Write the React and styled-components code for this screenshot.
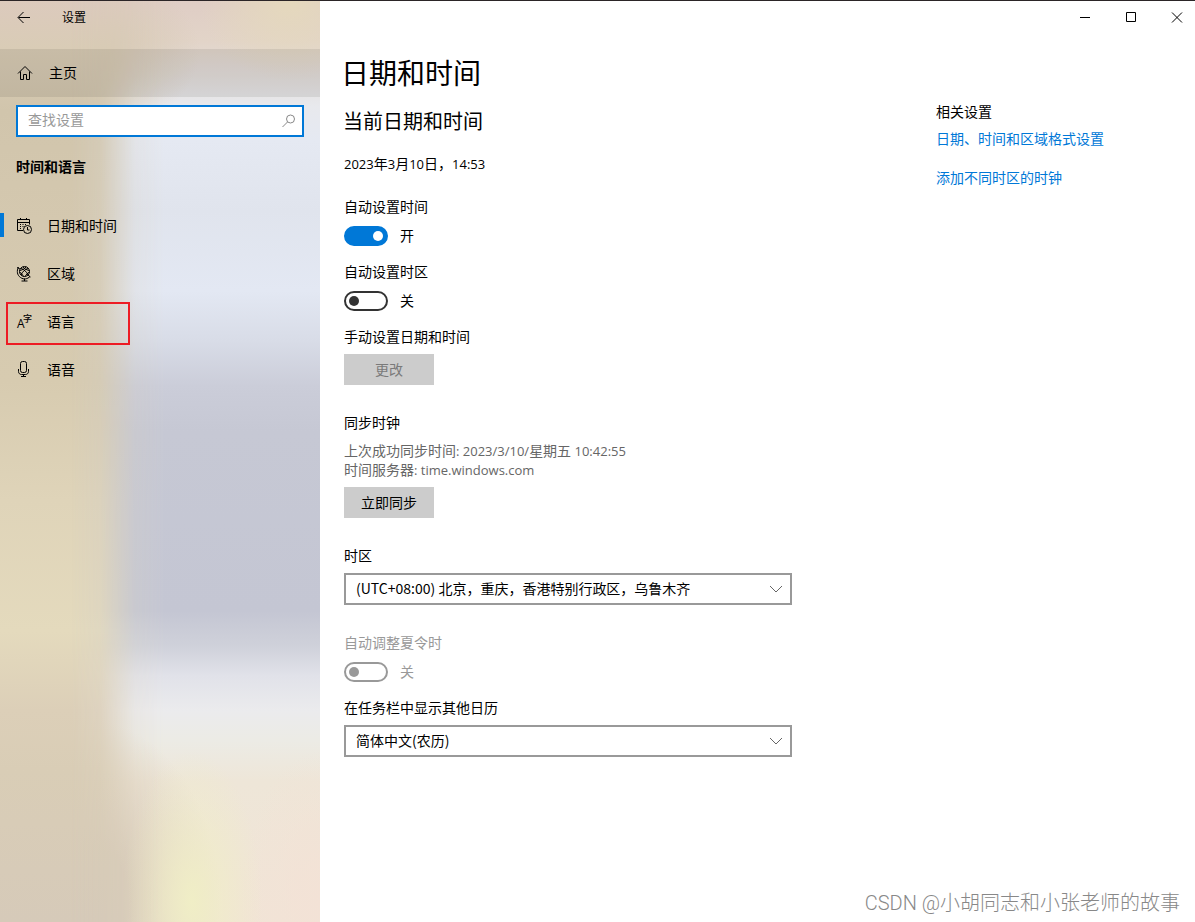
import { useState } from "react";
import styled, { createGlobalStyle } from "styled-components";

const GlobalStyle = createGlobalStyle`
  * {
    box-sizing: border-box;
  }
  body {
    margin: 0;
    background: #ffffff;
    color: #000000;
    font-family: "Open Sans", "Noto Sans CJK SC", sans-serif;
    font-size: 14px;
    line-height: 20px;
  }
  button,
  input,
  select {
    font: inherit;
    color: inherit;
    margin: 0;
  }
  h1,
  h2,
  h3,
  p {
    margin: 0;
    font-weight: 400;
  }
`;

const Window = styled.div`
  position: relative;
  display: grid;
  grid-template-columns: 320px minmax(0, 1fr);
  min-height: 100vh;
  border-top: 1px solid #2b2527;
`;

const Sidebar = styled.aside`
  position: relative;
  isolation: isolate;
  background: linear-gradient(
    #dccabd 0,
    #d9ccb6 48px,
    #d1c5ac 110px,
    #d4c8af 220px,
    #d7cbb0 380px,
    #dfd4b9 500px,
    #e4dabd 630px,
    #dccfb8 710px,
    #d9cdb6 770px,
    #d6cab9 100%
  );

  /* blurred wallpaper showing through on the right */
  &::before {
    content: "";
    position: absolute;
    inset: 0;
    z-index: -1;
    background: radial-gradient(
        70px 150px at 192px 900px,
        #f0eec6 0,
        #f0eec600 100%
      ),
      radial-gradient(130px 180px at 90px 900px, #d8ccba 30%, #d8ccba00 100%),
      radial-gradient(140px 90px at 60px 50px, #d5c8b3 30%, #d5c8b300 100%),
      radial-gradient(90px 80px at 290px 0, #e5d9bd 0, #e5d9bd00 100%),
      radial-gradient(80px 150px at 320px 900px, #f3e2d6 0, #f3e2d600 100%),
      linear-gradient(
        #dfcdc5 0,
        #e2d4c8 40px,
        #e3dedb 75px,
        #e8e9ed 105px,
        #e5e9f2 140px,
        #e0e4ed 210px,
        #e3e8f3 290px,
        #d8dce7 340px,
        #cbcdd9 385px,
        #c6c8d4 430px,
        #c4c6d3 610px,
        #cfd1da 645px,
        #e1e2e9 675px,
        #ebebed 710px,
        #ecebe5 740px,
        #eee6d8 780px,
        #f1e4d6 100%
      );
    mask-image: linear-gradient(
      to right,
      transparent 70px,
      #00000026 100px,
      #0000008c 120px,
      #000000d9 135px,
      #000000 165px
    );
  }
`;

const SidebarHeader = styled.header`
  display: flex;
  align-items: flex-start;
  height: 48px;
  font-size: 12px;
  line-height: 34px;
`;

const BackButton = styled.button`
  display: grid;
  place-items: center;
  width: 48px;
  height: 32px;
  padding: 0;
  border: 0;
  background: none;
`;

const AppName = styled.span`
  padding-left: 14px;
`;

const HomeLink = styled.a`
  display: flex;
  align-items: center;
  gap: 16px;
  height: 48px;
  padding: 0 17px;
  background: rgba(0, 0, 0, 0.08);
  color: inherit;
  text-decoration: none;
`;

const SearchBox = styled.label`
  display: flex;
  align-items: center;
  height: 32px;
  margin: 8px 16px 0;
  padding: 0 5px 0 10px;
  border: 2px solid #0078d7;
  background: #ffffff;
`;

const SearchInput = styled.input`
  flex: 1;
  min-width: 0;
  padding: 0 0 2px;
  border: 0;
  outline: 0;
  background: none;
  &::placeholder {
    color: #999999;
    opacity: 1;
  }
`;

const SectionTitle = styled.h2`
  padding: 20px 16px 0;
  font-size: 14px;
  font-weight: 700;
`;

const Nav = styled.nav`
  display: flex;
  flex-direction: column;
  padding-top: 25px;
`;

const NavItem = styled.a`
  position: relative;
  display: flex;
  align-items: center;
  gap: 15px;
  height: 48px;
  padding: 0 16px;
  color: inherit;
  text-decoration: none;

  &[aria-current="page"]::before {
    content: "";
    position: absolute;
    left: 0;
    top: 11px;
    width: 4px;
    height: 24px;
    background: #0078d7;
  }
`;

const Marker = styled.span`
  position: absolute;
  left: 6px;
  top: 4px;
  width: 124px;
  height: 43px;
  border: 2px solid #ed1c24;
`;

const Main = styled.main`
  display: flex;
  flex-direction: column;
`;

const WindowControls = styled.div`
  display: flex;
  justify-content: flex-end;
  gap: 10px;
`;

const ControlButton = styled.button`
  display: grid;
  place-items: center;
  width: 36px;
  height: 32px;
  padding: 0;
  border: 0;
  background: none;
`;

const Page = styled.div`
  display: grid;
  grid-template-columns: minmax(0, 1fr) 259px;
  padding: 22px 0 32px 24px;
`;

const PageTitle = styled.h1`
  margin-left: -3px;
  font-size: 28px;
  line-height: 36px;
`;

const Subtitle = styled.h2`
  margin-left: -1px;
  padding-top: 17px;
  font-size: 20px;
  line-height: 28px;
`;

const Now = styled.p`
  padding: 18px 0 23px;
`;

/* latin runs are set a size down to sit with the chinese text */
const Latin = styled.span`
  font-size: 13px;
  line-height: 1;
`;

const Field = styled.section`
  display: flex;
  flex-direction: column;
  align-items: flex-start;
  gap: ${(props) => props.$gap || 7}px;
  max-width: 448px;
  margin-bottom: ${(props) => props.$after || 16}px;
`;

const Label = styled.label`
  color: ${(props) => (props.$disabled ? "#999999" : "#000000")};
`;

const SwitchRow = styled.div`
  display: flex;
  align-items: center;
  gap: 12px;
  height: 20px;
  color: ${(props) => (props.$disabled ? "#999999" : "#000000")};
`;

const SwitchInput = styled.input`
  appearance: none;
  display: flex;
  align-items: center;
  width: 44px;
  height: 20px;
  padding: 0 3px;
  border: 2px solid #333333;
  border-radius: 10px;
  background: #ffffff;

  &::before {
    content: "";
    width: 10px;
    height: 10px;
    border-radius: 50%;
    background: #333333;
  }
  &:checked {
    justify-content: flex-end;
    border-color: #0078d7;
    background: #0078d7;
  }
  &:checked::before {
    background: #ffffff;
  }
  &:disabled {
    border-color: #999999;
  }
  &:disabled::before {
    background: #999999;
  }
`;

const Button = styled.button`
  min-width: 90px;
  height: 31px;
  padding: 0 16px;
  border: 0;
  background: #cccccc;
  &:disabled {
    color: #7a7a7a;
  }
`;

const SyncInfo = styled.p`
  color: #666666;
  line-height: 19px;
`;

const SelectBox = styled.div`
  display: grid;
  align-items: center;
  width: 100%;

  > * {
    grid-area: 1 / 1;
  }
  svg {
    justify-self: end;
    margin-right: 8px;
    pointer-events: none;
  }
`;

const StyledSelect = styled.select`
  appearance: none;
  width: 100%;
  height: 32px;
  padding: 0 32px 2px 10px;
  border: 2px solid #999999;
  border-radius: 0;
  background: #ffffff;
  font-family: "Noto Sans CJK SC", sans-serif;
`;

const Related = styled.aside`
  display: flex;
  flex-direction: column;
  align-items: flex-start;
  padding-top: 47px;
`;

const RelatedTitle = styled.h3`
  font-size: 14px;
  padding-bottom: 7px;
`;

const RelatedLink = styled.a`
  color: #0078d7;
  text-decoration: none;
  margin-bottom: 19px;
`;

const Watermark = styled.div`
  position: absolute;
  right: 15px;
  bottom: 5px;
  color: #888888;
  font-family: Roboto, "Noto Sans CJK SC", sans-serif;
  font-size: 20px;
  font-weight: 300;
  line-height: 28px;
`;

const Icon = ({ width = 16, height = 16, color = "#000000", children }) => (
  <svg
    width={width}
    height={height}
    viewBox={`0 0 ${width} ${height}`}
    fill="none"
    stroke={color}
    overflow="visible"
    aria-hidden="true"
  >
    {children}
  </svg>
);

const BackIcon = () => (
  <Icon>
    <path d="M14 8.500H2.500M7.500 3L2 8.500l5.500 5.500" />
  </Icon>
);

const HomeIcon = () => (
  <Icon>
    <path d="M1 8.500L8 1.500l7 7M3.500 6.500v8h3v-5h3v5h3v-8" />
  </Icon>
);

const SearchIcon = () => (
  <Icon color="#888888">
    <circle cx="9.500" cy="6" r="4" />
    <path d="M6.500 9L1.500 14" />
  </Icon>
);

const CalendarIcon = () => (
  <Icon>
    <path d="M7 12.500H1.500v-11h12v5M1.500 4.500h12M4.500 0v2M10.500 0v2" />
    <path d="M4 6.500h1M6.500 6.500h1M9 6.500h1M4 8.500h1M6.500 8.500h1M4 10.500h1" />
    <circle cx="11.500" cy="11.500" r="4" />
    <path d="M11.500 9v3h2" />
  </Icon>
);

const GlobeIcon = () => (
  <Icon>
    <circle cx="8.500" cy="5.500" r="5" />
    <path d="M5 2.500C7.500 3 11 6 12 9M12 2.500C9.500 3 6 6 5 9M3.500 6c2 1 3 3 4 4.500M13.500 6c-2 1-3.500 3-4.500 4.500M7 .8c.5 1.500 4 3.500 6.500 3.700M10 .8C9.500 2.300 6 4.300 3.500 4.500" />
    <path d="M2.500 1C.5 5 1 9 4.500 11.500s7 1.500 9.500-1M8.500 12.500v2.500M5.500 15h6" />
    <path d="M1 1.500l3 1.500M12 9l2.500 2" />
  </Icon>
);

const LanguageIcon = () => (
  <Icon>
    <g
      fill="#000000"
      stroke="none"
      fontFamily="'Open Sans', 'Noto Sans CJK SC', sans-serif"
    >
      <text x="1" y="14" fontSize="12">
        A
      </text>
      <text x="7" y="8" fontSize="9" fontWeight="500">
        字
      </text>
    </g>
  </Icon>
);

const MicIcon = () => (
  <Icon>
    <rect x="4.500" y="-0.500" width="6" height="11" rx="2" />
    <path d="M2.500 7v2.500c0 2 1.500 3 3 3h4c1.500 0 3-1 3-3V7M7.500 12.500v2M5 14.500h5" />
  </Icon>
);

const ChevronIcon = () => (
  <Icon color="#666666">
    <path d="M2 5l6 6 6-6" />
  </Icon>
);

const MinimizeIcon = () => (
  <Icon width={11} height={11}>
    <path d="M0 5.500h10" />
  </Icon>
);

const MaximizeIcon = () => (
  <Icon width={11} height={11}>
    <path d="M.5 .5h9v9h-9z" />
  </Icon>
);

const CloseIcon = () => (
  <Icon width={11} height={11}>
    <path d="M0 .5l10 10M10 .5l-10 10" />
  </Icon>
);

const navItems = [
  { id: "date", label: "日期和时间", icon: <CalendarIcon /> },
  { id: "region", label: "区域", icon: <GlobeIcon /> },
  { id: "language", label: "语言", icon: <LanguageIcon />, marked: true },
  { id: "speech", label: "语音", icon: <MicIcon /> },
];

const Switch = ({ id, label, defaultChecked = false, disabled, after }) => {
  const [on, setOn] = useState(defaultChecked);

  return (
    <Field $gap={9} $after={after}>
      <Label htmlFor={id} $disabled={disabled}>
        {label}
      </Label>
      <SwitchRow $disabled={disabled}>
        <SwitchInput
          id={id}
          type="checkbox"
          role="switch"
          checked={on}
          disabled={disabled}
          onChange={(e) => setOn(e.target.checked)}
        />
        <span>{on ? "开" : "关"}</span>
      </SwitchRow>
    </Field>
  );
};

const Select = ({ id, label, options, after }) => (
  <Field $after={after}>
    <Label htmlFor={id}>{label}</Label>
    <SelectBox>
      <StyledSelect id={id}>
        {options.map((option) => (
          <option key={option}>{option}</option>
        ))}
      </StyledSelect>
      <ChevronIcon />
    </SelectBox>
  </Field>
);

const App = () => {
  return (
    <>
      <GlobalStyle />
      <Window>
        <Sidebar>
          <SidebarHeader>
            <BackButton aria-label="返回">
              <BackIcon />
            </BackButton>
            <AppName>设置</AppName>
          </SidebarHeader>
          <HomeLink href="#home">
            <HomeIcon />
            主页
          </HomeLink>
          <SearchBox>
            <SearchInput
              type="text"
              placeholder="查找设置"
              aria-label="查找设置"
            />
            <SearchIcon />
          </SearchBox>
          <SectionTitle>时间和语言</SectionTitle>
          <Nav>
            {navItems.map((item) => (
              <NavItem
                key={item.id}
                href={`#${item.id}`}
                aria-current={item.id === "date" ? "page" : undefined}
              >
                {item.icon}
                {item.label}
                {item.marked && <Marker />}
              </NavItem>
            ))}
          </Nav>
        </Sidebar>

        <Main>
          <WindowControls>
            <ControlButton aria-label="最小化">
              <MinimizeIcon />
            </ControlButton>
            <ControlButton aria-label="最大化">
              <MaximizeIcon />
            </ControlButton>
            <ControlButton aria-label="关闭">
              <CloseIcon />
            </ControlButton>
          </WindowControls>

          <Page>
            <div>
              <PageTitle>日期和时间</PageTitle>
              <Subtitle>当前日期和时间</Subtitle>
              <Now>
                <Latin>2023</Latin>年<Latin>3</Latin>月<Latin>10</Latin>日，
                <Latin>14:53</Latin>
              </Now>

              <Switch id="auto-time" label="自动设置时间" defaultChecked />
              <Switch id="auto-zone" label="自动设置时区" />

              <Field $after={28}>
                <Label as="p">手动设置日期和时间</Label>
                <Button disabled>更改</Button>
              </Field>

              <Field $gap={8} $after={28}>
                <Label as="p">同步时钟</Label>
                <SyncInfo>
                  上次成功同步时间<Latin>: 2023/3/10/</Latin>星期五
                  <Latin> 10:42:55</Latin>
                  <br />
                  时间服务器<Latin>: time.windows.com</Latin>
                </SyncInfo>
                <Button>立即同步</Button>
              </Field>

              <Select
                id="zone"
                label="时区"
                options={["(UTC+08:00) 北京，重庆，香港特别行政区，乌鲁木齐"]}
                after={28}
              />
              <Switch id="dst" label="自动调整夏令时" disabled />
              <Select
                id="calendar"
                label="在任务栏中显示其他日历"
                options={["简体中文(农历)"]}
              />
            </div>

            <Related>
              <RelatedTitle>相关设置</RelatedTitle>
              <RelatedLink href="#formats">
                日期、时间和区域格式设置
              </RelatedLink>
              <RelatedLink href="#clocks">添加不同时区的时钟</RelatedLink>
            </Related>
          </Page>
        </Main>

        <Watermark>CSDN @小胡同志和小张老师的故事</Watermark>
      </Window>
    </>
  );
};

export default App;
